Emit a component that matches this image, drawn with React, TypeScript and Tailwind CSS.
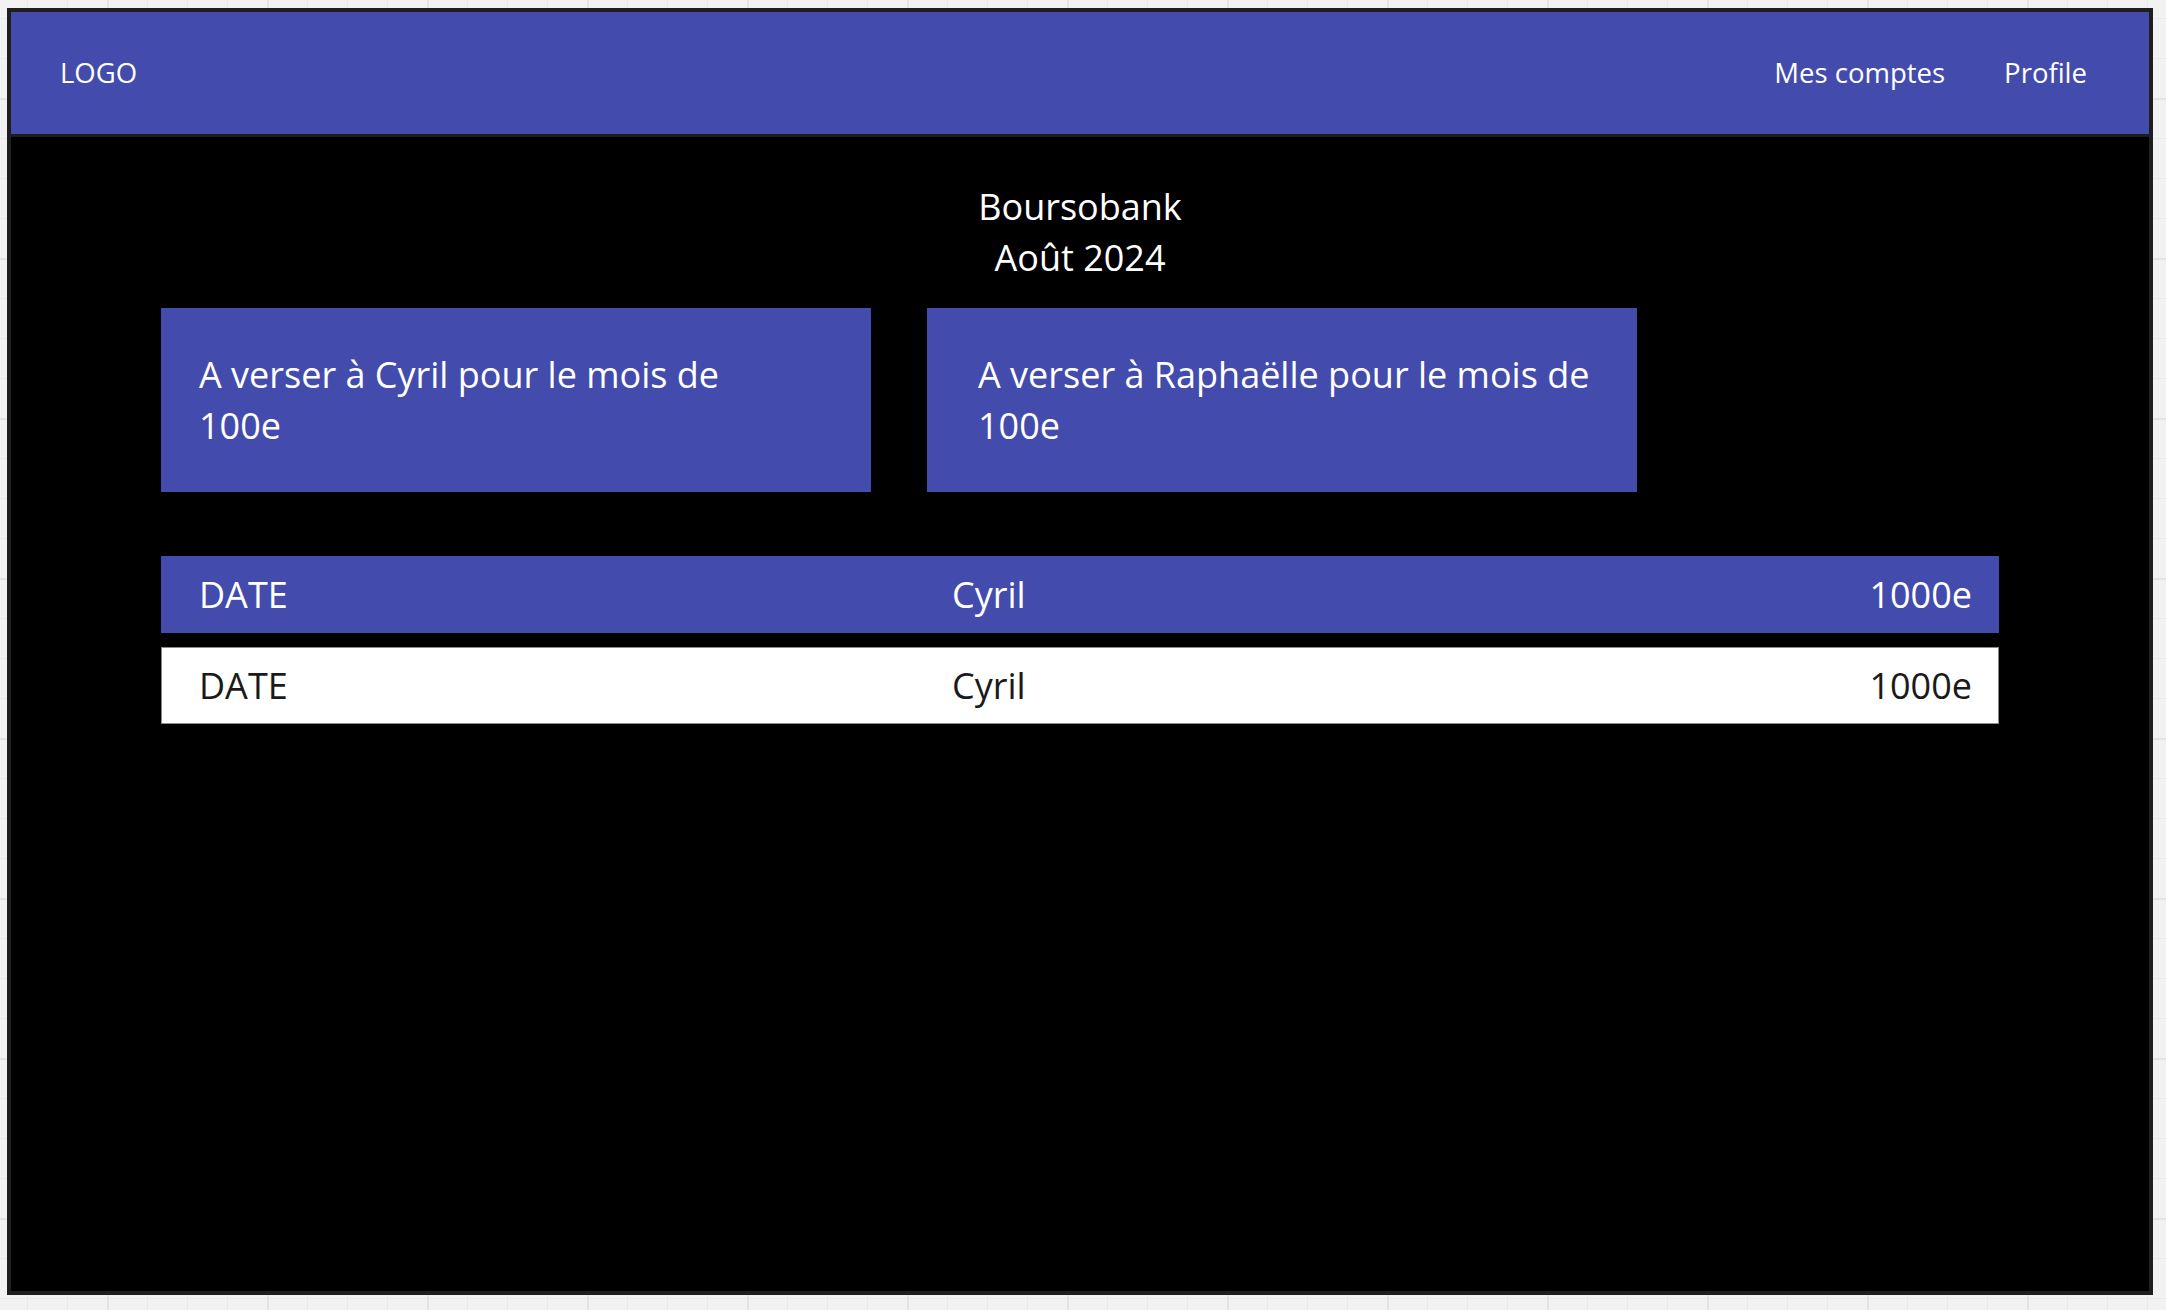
const rows = [
  { date: "DATE", name: "Cyril", amount: "1000e", header: true },
  { date: "DATE", name: "Cyril", amount: "1000e", header: false },
];

const cards = [
  { who: "Cyril", amount: "100e", pad: "pl-[38px]" },
  { who: "Raphaëlle", amount: "100e", pad: "pl-[51px]" },
];

export default function App() {
  return (
    <div className="w-[2166px] h-[1310px] overflow-hidden bg-[#f2f2f2] bg-[linear-gradient(to_right,#e3e3e3_2px,transparent_2px),linear-gradient(to_bottom,#e3e3e3_2px,transparent_2px),linear-gradient(to_right,#e9e9e9_1px,transparent_1px),linear-gradient(to_bottom,#e9e9e9_1px,transparent_1px)] bg-[size:160px_160px,160px_160px,40px_40px,40px_40px] bg-[position:107px_98px,107px_98px,27px_18px,27px_18px] pl-[7px] pt-[8px] font-['Open_Sans',sans-serif]">
      <div className="w-[2146px] h-[1287px] border-4 border-[#1e1e1e] bg-black flex flex-col">
        {/* top bar */}
        <header className="h-[125px] shrink-0 bg-[#434cac] border-b-[3px] border-[#1e1e1e] flex items-center justify-between pl-[49px] pr-[62px] text-white text-[27.5px]">
          <span>LOGO</span>
          <nav className="flex items-center gap-[59px]">
            <span>Mes comptes</span>
            <span>Profile</span>
          </nav>
        </header>

        <main className="flex-1 pt-[44px] pl-[150px]">
          <div className="w-[1838px] text-center text-white text-[36px] leading-[51px]">
            <p>Boursobank</p>
            <p>Août 2024</p>
          </div>

          <div className="mt-[25px] flex gap-[56px]">
            {cards.map((card) => (
              <div
                key={card.who}
                className={`w-[710px] h-[184px] bg-[#434cac] ${card.pad} pt-[41px] text-white text-[36px] leading-[51px]`}
              >
                <p>A verser à {card.who} pour le mois de</p>
                <p>{card.amount}</p>
              </div>
            ))}
          </div>

          <div className="mt-[64px] w-[1838px] flex flex-col gap-[14px]">
            {rows.map((row, i) => (
              <div
                key={i}
                className={
                  row.header
                    ? "h-[77px] bg-[#434cac] text-white flex items-center pl-[38px] pr-[27px] text-[36px]"
                    : "h-[77px] bg-white border border-[#8a8a8a] text-[#1a1a1a] flex items-center pl-[37px] pr-[26px] text-[36px]"
                }
              >
                <span className="w-[753px] shrink-0">{row.date}</span>
                <span className="flex-1">{row.name}</span>
                <span>{row.amount}</span>
              </div>
            ))}
          </div>
        </main>
      </div>
    </div>
  );
}
